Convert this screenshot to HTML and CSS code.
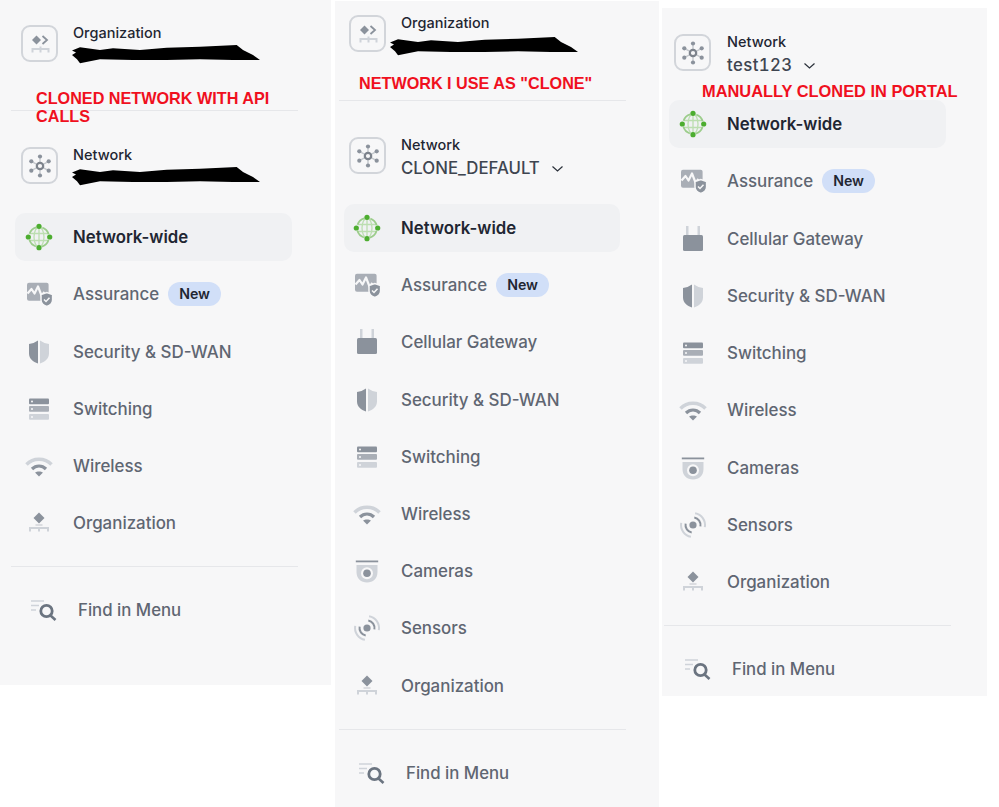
FILE: index.html
```html
<!DOCTYPE html>
<html lang="en">
<head>
<meta charset="utf-8">
<title>Network menus compared</title>
<link rel="stylesheet" href="styles.css">
</head>
<body>
<svg class="defs" aria-hidden="true">
  <symbol id="i-org-box" viewBox="0 0 28 28">
    <path class="dk" d="M10.500 5.500l4.500 4.500-4.500 4.500L6 10z"/>
    <path class="ln-dk" fill="none" stroke-width="1.800" d="M16.500 6l4.500 4-4.500 4"/>
    <path class="ln-lt" fill="none" stroke-width="2" d="M6.500 22.500V19h16v3.500M14.500 16.500v6"/>
  </symbol>
  <symbol id="i-net" viewBox="0 0 28 28">
    <path stroke="#c3c7cc" stroke-width="1.400" d="M14 4.500v19M5.300 9.300l17.400 9.400M22.700 9.300l-17.400 9.400"/>
    <circle class="dk" cx="14" cy="4.500" r="2.100"/><circle class="dk" cx="14" cy="23.500" r="2.100"/>
    <circle class="dk" cx="5.300" cy="9.300" r="2.100"/><circle class="dk" cx="22.700" cy="9.300" r="2.100"/>
    <circle class="dk" cx="5.300" cy="18.700" r="2.100"/><circle class="dk" cx="22.700" cy="18.700" r="2.100"/>
    <circle cx="14" cy="14" r="3.200" fill="#f7f7f8" stroke="#7d838c" stroke-width="2.200"/>
  </symbol>
  <symbol id="i-globe" viewBox="0 0 28 28">
    <g fill="none" stroke="#bcdeb0" stroke-width="1.300">
      <ellipse cx="14" cy="14" rx="5" ry="10"/>
      <path d="M5 10.500h18M5 17.500h18M14 4v20"/>
    </g>
    <circle cx="14" cy="14" r="10" fill="none" stroke="#9ccd8b" stroke-width="1.800" stroke-dasharray="9.500 6.200" stroke-dashoffset="12.600"/>
    <g fill="#4cad2f">
      <circle cx="14" cy="3.300" r="2.600"/><circle cx="14" cy="24.700" r="2.600"/>
      <circle cx="3.300" cy="14" r="2.600"/><circle cx="24.700" cy="14" r="2.600"/>
    </g>
  </symbol>
  <symbol id="i-assure" viewBox="0 0 28 28">
    <rect class="md" x="2" y="2.700" width="21.600" height="18" rx="2"/>
    <path fill="none" stroke="#f7f7f8" stroke-width="2.200" stroke-linejoin="round" d="M2.500 13.500L6.500 9l3 4.500L13 6.500l3.500 9 3-3.500"/>
    <path class="dk" stroke="#f7f7f8" stroke-width="1.500" d="M16 14.500l5.800-2 5.800 2v5.500c0 3-3 5.500-5.800 6.500-2.800-1-5.800-3.500-5.800-6.500z"/>
    <path fill="none" stroke="#f7f7f8" stroke-width="1.500" d="M19 19.500l2 2 3.500-3.800"/>
  </symbol>
  <symbol id="i-cell" viewBox="0 0 28 28">
    <path class="lt" d="M7 1h2.500v9H7zM18.500 1H21v9h-2.500z"/>
    <rect class="dk" x="4" y="10" width="20" height="16" rx="1.500"/>
  </symbol>
  <symbol id="i-shield" viewBox="0 0 28 28">
    <path class="dk" d="M13 2.500V25.500C8 24 4 20.500 4 15.500V6c3-.3 6-1.500 9-3.500z"/>
    <path class="lt" d="M15 2.500V25.500c5-1.500 9-5 9-10V6c-3-.3-6-1.500-9-3.500z"/>
  </symbol>
  <symbol id="i-switch" viewBox="0 0 28 28">
    <rect class="dk" x="4" y="3.500" width="20" height="5.800" rx="1"/>
    <rect class="md" x="4" y="11" width="20" height="5.800" rx="1"/>
    <rect class="lt" x="4" y="19" width="20" height="5.800" rx="1"/>
    <g fill="#f7f7f8"><circle cx="7" cy="6.400" r="1"/><circle cx="7" cy="13.900" r="1"/><circle cx="7" cy="21.900" r="1"/></g>
  </symbol>
  <symbol id="i-wifi" viewBox="0 0 28 28">
    <path class="ln-lt" fill="none" stroke-width="3.400" d="M1.500 12.500C8 5.500 20 5.500 26.500 12.500"/>
    <path class="ln-dk" fill="none" stroke-width="3.200" d="M7 17c4-4 10-4 14 0"/>
    <path class="dk" d="M10 20.500c2-1.500 6-1.500 8 0L14 24.500z"/>
  </symbol>
  <symbol id="i-cam" viewBox="0 0 28 28">
    <path class="dk" d="M2.800 3.500h22.400v1.800H2.800z"/>
    <path class="lt" d="M3.500 8h21v7c0 6.500-4.500 10.500-10.500 10.500S3.500 21.500 3.500 15z"/>
    <circle cx="14" cy="16.300" r="6" fill="#f7f7f8"/>
    <circle class="dk" cx="14" cy="16.300" r="3.800"/>
  </symbol>
  <symbol id="i-sensor" viewBox="0 0 28 28">
    <circle class="dk" cx="14" cy="14" r="3.600"/>
    <g fill="none" stroke-width="2">
      <path class="ln-dk" d="M15.300 6.600A7.500 7.500 0 0 1 21.400 15.300"/>
      <path class="ln-lt" d="M16.100 2.200A12 12 0 0 1 25.800 16.100"/>
      <path class="ln-dk" d="M12.700 21.400A7.500 7.500 0 0 1 6.600 12.700"/>
      <path class="ln-lt" d="M11.900 25.800A12 12 0 0 1 2.200 11.900"/>
    </g>
  </symbol>
  <symbol id="i-org" viewBox="0 0 28 28">
    <path class="dk" d="M14 3.500l5.500 5.500L14 14.500 8.500 9z"/>
    <path class="dk" d="M10.500 15.500h7v1h-7z" opacity=".5"/>
    <path class="ln-lt" fill="none" stroke-width="2" d="M5 22.500v-3.500h18v3.500M14 19v3.500"/>
  </symbol>
  <symbol id="i-find" viewBox="0 0 28 28">
    <path class="ln-lt" fill="none" stroke-width="1.700" d="M1 5h13M1 9.500h8M1 14h5"/>
    <circle cx="16.500" cy="15" r="5.700" fill="none" stroke="#6b7480" stroke-width="2.800"/>
    <path fill="none" stroke="#6b7480" stroke-width="2.600" d="M20.500 19.500l5 4.500"/>
  </symbol>
  <symbol id="i-scribble" viewBox="0 0 190 20">
    <path fill="#000" d="M0 6.500L8 3.300 28 6 41 4.300 68 6 94.700 3.700 128 2.700 164.700 1 171 6 181 11 188 16 161 16 128 15.300 94.700 16 61 16 28 15.300 8 19.300 5 15.300 0 11 4 8.500z"/>
  </symbol>
</svg>

<main class="sheet">
  <section class="panel panel-api">
    <p class="note note-api">CLONED NETWORK WITH API CALLS</p>
    <div class="head">
      <span class="box"><svg class="box-icon"><use href="#i-org-box"/></svg></span>
      <div class="head-text">
        <span class="head-label">Organization</span>
        <svg class="scribble"><use href="#i-scribble"/></svg>
      </div>
    </div>
    <hr class="rule rule-org">
    <div class="head">
      <span class="box"><svg class="box-icon"><use href="#i-net"/></svg></span>
      <div class="head-text">
        <span class="head-label">Network</span>
        <svg class="scribble"><use href="#i-scribble"/></svg>
      </div>
    </div>
    <nav class="menu">
      <a class="item active"><svg class="icon"><use href="#i-globe"/></svg>Network-wide</a>
      <a class="item"><svg class="icon"><use href="#i-assure"/></svg>Assurance<span class="badge">New</span></a>
      <a class="item"><svg class="icon"><use href="#i-shield"/></svg>Security &amp; SD-WAN</a>
      <a class="item"><svg class="icon"><use href="#i-switch"/></svg>Switching</a>
      <a class="item"><svg class="icon"><use href="#i-wifi"/></svg>Wireless</a>
      <a class="item"><svg class="icon"><use href="#i-org"/></svg>Organization</a>
    </nav>
    <hr class="rule rule-menu">
    <a class="find"><svg class="icon"><use href="#i-find"/></svg>Find in Menu</a>
  </section>

  <section class="panel panel-clone">
    <p class="note note-clone">NETWORK I USE AS "CLONE"</p>
    <div class="head">
      <span class="box"><svg class="box-icon"><use href="#i-org-box"/></svg></span>
      <div class="head-text">
        <span class="head-label">Organization</span>
        <svg class="scribble scribble-wide"><use href="#i-scribble"/></svg>
      </div>
    </div>
    <hr class="rule rule-org">
    <div class="head">
      <span class="box"><svg class="box-icon"><use href="#i-net"/></svg></span>
      <div class="head-text">
        <span class="head-label">Network</span>
        <span class="head-value">CLONE_DEFAULT<svg class="chev" viewBox="0 0 11 6"><path d="M.5.500L5.500 5l5-4.500"/></svg></span>
      </div>
    </div>
    <nav class="menu">
      <a class="item active"><svg class="icon"><use href="#i-globe"/></svg>Network-wide</a>
      <a class="item"><svg class="icon"><use href="#i-assure"/></svg>Assurance<span class="badge">New</span></a>
      <a class="item"><svg class="icon"><use href="#i-cell"/></svg>Cellular Gateway</a>
      <a class="item"><svg class="icon"><use href="#i-shield"/></svg>Security &amp; SD-WAN</a>
      <a class="item"><svg class="icon"><use href="#i-switch"/></svg>Switching</a>
      <a class="item"><svg class="icon"><use href="#i-wifi"/></svg>Wireless</a>
      <a class="item"><svg class="icon"><use href="#i-cam"/></svg>Cameras</a>
      <a class="item"><svg class="icon"><use href="#i-sensor"/></svg>Sensors</a>
      <a class="item"><svg class="icon"><use href="#i-org"/></svg>Organization</a>
    </nav>
    <hr class="rule rule-menu">
    <a class="find"><svg class="icon"><use href="#i-find"/></svg>Find in Menu</a>
  </section>

  <section class="panel panel-manual">
    <p class="note note-manual">MANUALLY CLONED IN PORTAL</p>
    <div class="head">
      <span class="box"><svg class="box-icon"><use href="#i-net"/></svg></span>
      <div class="head-text">
        <span class="head-label">Network</span>
        <span class="head-value">test123<svg class="chev" viewBox="0 0 11 6"><path d="M.5.500L5.500 5l5-4.500"/></svg></span>
      </div>
    </div>
    <nav class="menu">
      <a class="item active"><svg class="icon"><use href="#i-globe"/></svg>Network-wide</a>
      <a class="item"><svg class="icon"><use href="#i-assure"/></svg>Assurance<span class="badge">New</span></a>
      <a class="item"><svg class="icon"><use href="#i-cell"/></svg>Cellular Gateway</a>
      <a class="item"><svg class="icon"><use href="#i-shield"/></svg>Security &amp; SD-WAN</a>
      <a class="item"><svg class="icon"><use href="#i-switch"/></svg>Switching</a>
      <a class="item"><svg class="icon"><use href="#i-wifi"/></svg>Wireless</a>
      <a class="item"><svg class="icon"><use href="#i-cam"/></svg>Cameras</a>
      <a class="item"><svg class="icon"><use href="#i-sensor"/></svg>Sensors</a>
      <a class="item"><svg class="icon"><use href="#i-org"/></svg>Organization</a>
    </nav>
    <hr class="rule rule-menu">
    <a class="find"><svg class="icon"><use href="#i-find"/></svg>Find in Menu</a>
  </section>
</main>
</body>
</html>
```

FILE: styles.css
```css
* { box-sizing: border-box; }

html, body {
  margin: 0;
  background: #fff;
}

body {
  width: 999px;
  height: 807px;
  overflow: hidden;
  font-family: Inter, "Liberation Sans", sans-serif;
}

.defs { display: none; }

.dk { fill: #8b929c; }
.md { fill: #a9aeb6; }
.lt { fill: #cfd3d9; }
.ln-dk { stroke: #8b929c; }
.ln-lt { stroke: #cfd3d9; }

.sheet {
  display: flex;
  align-items: flex-start;
}

.panel {
  position: relative;
  flex: none;
  background: #f7f7f8;
}

.panel-api {
  width: 331px;
  height: 685px;
  padding: 25px 0 0 11px;
}

.panel-clone {
  width: 324px;
  height: 806px;
  margin: 1px 0 0 4px;
  padding: 14px 0 0 4px;
}

.panel-manual {
  width: 325px;
  height: 688px;
  margin: 8px 0 0 3px;
  padding: 26px 0 0 2px;
}

.note {
  position: absolute;
  margin: 0;
  color: #f0101e;
  font: 700 16.200px/18px "Liberation Sans", sans-serif;
}

.note-api { left: 36px; top: 89px; width: 275px; }
.note-clone { left: 24px; top: 73px; white-space: nowrap; }
.note-manual { left: 40px; top: 74px; white-space: nowrap; font-size: 16.400px; }

.head {
  display: flex;
  gap: 15px;
  height: 37px;
  padding-left: 10px;
}

.panel-manual .head { gap: 16px; }

.box {
  flex: none;
  display: flex;
  align-items: center;
  justify-content: center;
  width: 37px;
  height: 37px;
  border: 2.500px solid #d2d5da;
  border-radius: 9px;
}

.box-icon {
  width: 28px;
  height: 28px;
}

.head-text {
  display: flex;
  flex-direction: column;
  align-items: flex-start;
  margin-top: -1px;
}

.head-label {
  color: #1f2632;
  font-size: 14.500px;
  font-weight: 500;
  line-height: 18px;
}

.head-value {
  display: flex;
  align-items: center;
  gap: 12px;
  color: #3e4550;
  font-size: 16.800px;
  font-weight: 500;
  font-variant-numeric: tabular-nums;
  line-height: 28px;
  white-space: nowrap;
}

.panel-manual .head-value {
  gap: 11px;
  letter-spacing: .4px;
}

.chev {
  width: 11px;
  height: 6px;
  margin-top: 1px;
  fill: none;
  stroke: #2a303a;
  stroke-width: 1.200;
}

.scribble {
  display: block;
  flex: none;
  width: 190px;
  height: 20px;
  margin: 2px 0 0 -1px;
}

.scribble-wide { margin: 4px 0 0 -11px; }

.rule {
  height: 1px;
  margin: 0;
  border: 0;
  background: #e6e7ea;
  width: 287px;
}

.rule-org { margin: 48px 0 36px; }
.rule-menu { margin-top: 19px; }

.menu {
  display: flex;
  flex-direction: column;
  gap: 9.250px;
  margin: 29px 0 0 4px;
}

.panel-clone .menu { margin: 30px 0 0 5px; gap: 9.200px; }
.panel-manual .menu { margin-left: 5px; }

.item {
  display: flex;
  align-items: center;
  gap: 20px;
  width: 277px;
  height: 48px;
  padding-left: 10px;
  border-radius: 10px;
  color: #5f6672;
  font-size: 16.900px;
  font-weight: 500;
}

.panel-clone .item {
  width: 276px;
  padding-left: 9px;
}

.item.active {
  background: #f0f1f3;
  color: #1f2632;
  font-size: 16.800px;
  font-weight: 600;
}

.icon {
  flex: none;
  width: 28px;
  height: 28px;
}

.badge {
  margin-left: -11px;
  padding: 0 11px;
  border-radius: 12px;
  background: #d1dff8;
  color: #1f2632;
  font-size: 14.200px;
  font-weight: 600;
  line-height: 24px;
}

.find {
  display: flex;
  align-items: center;
  gap: 20px;
  height: 48px;
  margin-top: 19px;
  padding-left: 19px;
  color: #5f6672;
  font-size: 16.800px;
  font-weight: 500;
}

.panel-manual .find { padding-left: 20px; }
```
